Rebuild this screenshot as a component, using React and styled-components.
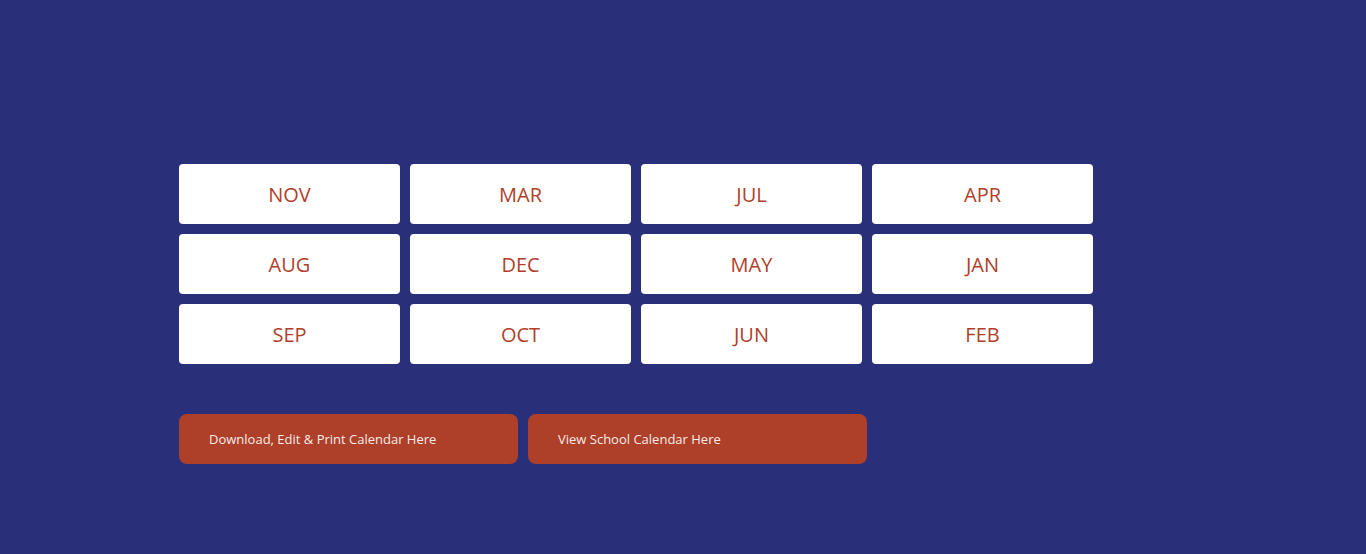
import React from "react";
import styled, { createGlobalStyle } from "styled-components";

const GlobalStyle = createGlobalStyle`
    html, body {
        margin: 0;
        padding: 0;
        background-color: #2a2f7a;
    }
    * {
        box-sizing: border-box;
    }
`;

const Page = styled.div`
    min-height: 554px;
    padding: 164px 0 0 179px;
    background-color: #2a2f7a;
    font-family: "Open Sans", "Liberation Sans", sans-serif;
`;

const MonthGrid = styled.div`
    display: grid;
    grid-template-columns: repeat(4, 221px);
    grid-auto-rows: 60px;
    gap: 10px;
`;

const MonthCard = styled.a`
    display: flex;
    align-items: center;
    justify-content: center;
    background-color: #ffffff;
    border-radius: 4px;
    color: #b03f2a;
    font-size: 20px;
    text-decoration: none;
    cursor: pointer;
`;

const ButtonRow = styled.div`
    display: flex;
    gap: 10px;
    margin-top: 50px;
`;

const CalendarButton = styled.a`
    display: flex;
    align-items: center;
    width: 339px;
    height: 50px;
    padding-left: 30px;
    background-color: #ae3f28;
    border-radius: 8px;
    color: #f4ece9;
    font-size: 13px;
    text-decoration: none;
    cursor: pointer;
`;

const months = ["NOV", "MAR", "JUL", "APR", "AUG", "DEC", "MAY", "JAN", "SEP", "OCT", "JUN", "FEB"];

function App() {
    return (
        <>
            <GlobalStyle />
            <Page>
                <MonthGrid>
                    {months.map((m) => (
                        <MonthCard key={m}>{m}</MonthCard>
                    ))}
                </MonthGrid>
                <ButtonRow>
                    <CalendarButton>Download, Edit &amp; Print Calendar Here</CalendarButton>
                    <CalendarButton>View School Calendar Here</CalendarButton>
                </ButtonRow>
            </Page>
        </>
    );
}

export default App;
